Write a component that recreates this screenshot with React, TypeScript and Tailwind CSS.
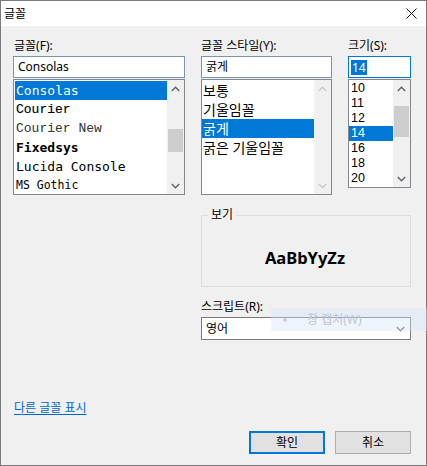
import React from "react";

const UI = "font-['Noto_Sans','Noto_Sans_CJK_KR',sans-serif]";

function Chevron({ dir, color }: { dir: "up" | "down"; color: string }) {
  return (
    <svg width="9" height="6" viewBox="0 0 9 6">
      <polyline
        points={dir === "up" ? "0.8,5 4.5,1.2 8.2,5" : "0.8,1 4.5,4.8 8.2,1"}
        fill="none"
        stroke={color}
        strokeWidth="1.3"
      />
    </svg>
  );
}

function Scrollbar({
  enabled,
  thumbTop,
  thumbH,
}: {
  enabled: boolean;
  thumbTop?: number;
  thumbH?: number;
}) {
  const c = enabled ? "#606060" : "#c8c8c8";
  return (
    <div className="w-[17px] h-full bg-[#f0f0f0] flex flex-col">
      <div className="h-[17px] flex items-center justify-center">
        <Chevron dir="up" color={c} />
      </div>
      <div className="flex-1 relative">
        {enabled && thumbTop !== undefined && (
          <div
            className="absolute left-px right-px bg-[#cdcdcd]"
            style={{ top: thumbTop, height: thumbH }}
          />
        )}
      </div>
      <div className="h-[17px] flex items-center justify-center">
        <Chevron dir="down" color={c} />
      </div>
    </div>
  );
}

export default function App() {
  const fonts: { name: string; cls: string }[] = [
    { name: "Consolas", cls: "font-['DejaVu_Sans_Mono',monospace] text-[13px]" },
    { name: "Courier", cls: "font-['Liberation_Mono',monospace] text-[13px] [-webkit-text-stroke:0.15px_black]" },
    { name: "Courier New", cls: "font-['Liberation_Mono',monospace] text-[13px] text-[#333]" },
    { name: "Fixedsys", cls: "font-['DejaVu_Sans_Mono',monospace] text-[13px] font-bold" },
    { name: "Lucida Console", cls: "font-['DejaVu_Sans_Mono',monospace] text-[13px]" },
    { name: "MS Gothic", cls: "font-['DejaVu_Sans_Mono',monospace] text-[11.5px]" },
  ];
  const styles = ["보통", "기울임꼴", "굵게", "굵은 기울임꼴"];
  const sizes = ["10", "11", "12", "14", "16", "18", "20"];

  return (
    <div
      className={`w-[427px] h-[466px] border border-[#7a7a7a] flex flex-col bg-[#f0f0f0] text-black ${UI}`}
    >
      {/* title bar */}
      <div className="h-[25px] bg-white flex items-center justify-between pl-[3px] pr-[9px]">
        <span className="text-[12px] leading-[14px]">글꼴</span>
        <svg width="11" height="11" viewBox="0 0 11 11">
          <line x1="0.5" y1="0.5" x2="10.5" y2="10.5" stroke="#111" strokeWidth="1" />
          <line x1="10.5" y1="0.5" x2="0.5" y2="10.5" stroke="#111" strokeWidth="1" />
        </svg>
      </div>

      {/* body */}
      <div className="flex-1 relative pl-[12px] pr-[15px] pt-[13px] flex flex-col">
        <div className="flex">
          {/* font column */}
          <div className="w-[172px] flex flex-col">
            <div className="text-[12px] leading-[14px] h-[14px] pl-px">글꼴(F):</div>
            <div className="mt-[3px] h-[22px] border border-[#7d93b2] bg-white flex items-center pl-[4px] text-[12px] leading-[16px]">
              Consolas
            </div>
            <div className="mt-px h-[116px] border border-[#828790] bg-white flex">
              <div className="flex-1 pt-px pl-px">
                {fonts.map((f, i) => (
                  <div
                    key={f.name}
                    className={`h-[19px] leading-[19px] flex items-center pl-[1px] whitespace-nowrap ${f.cls} ${
                      i === 0 ? "bg-[#0078d7] text-white" : ""
                    }`}
                  >
                    {f.name}
                  </div>
                ))}
              </div>
              <Scrollbar enabled thumbTop={32} thumbH={23} />
            </div>
          </div>

          {/* right area */}
          <div className="ml-[16px] w-[210px] flex flex-col">
            <div className="flex">
              {/* style column */}
              <div className="w-[131px] flex flex-col">
                <div className="text-[12px] leading-[14px] h-[14px]">글꼴 스타일(Y):</div>
                <div className="mt-[3px] h-[22px] border border-[#7d93b2] bg-white flex items-center pl-[4px] text-[12px] leading-[16px]">
                  굵게
                </div>
                <div className="mt-px h-[116px] border border-[#828790] bg-white flex">
                  <div className="flex-1 pt-px">
                    {styles.map((s, i) => (
                      <div
                        key={s}
                        className={`h-[19px] leading-[19px] flex items-center pl-[1px] text-[14px] whitespace-nowrap ${
                          i === 2 ? "bg-[#0078d7] text-white" : ""
                        }`}
                      >
                        {s}
                      </div>
                    ))}
                  </div>
                  <Scrollbar enabled={false} />
                </div>
              </div>

              {/* size column */}
              <div className="ml-[16px] w-[63px] flex flex-col">
                <div className="text-[12px] leading-[14px] h-[14px]">크기(S):</div>
                <div className="mt-[3px] h-[22px] border border-[#0078d7] bg-white flex items-center pl-[2px] text-[12px]">
                  <span className="bg-[#0078d7] text-white leading-[15px] px-px">14</span>
                </div>
                <div className="mt-px h-[109px] border border-[#828790] bg-white flex">
                  <div className="flex-1 pt-px">
                    {sizes.map((s) => (
                      <div
                        key={s}
                        className={`h-[15px] leading-[15px] flex items-center pl-[2px] text-[12.5px] font-['Liberation_Sans',sans-serif] ${
                          s === "14" ? "bg-[#0078d7] text-white" : ""
                        }`}
                      >
                        {s}
                      </div>
                    ))}
                  </div>
                  <Scrollbar enabled thumbTop={9} thumbH={31} />
                </div>
              </div>
            </div>

            {/* preview group */}
            <div className="mt-[20px] h-[72px] border border-[#dcdcdc] relative flex items-center justify-center">
              <span className="absolute left-[6px] top-[-8px] bg-[#f0f0f0] px-[3px] text-[12px] leading-[14px]">
                보기
              </span>
              <span className="font-bold text-[16.5px] leading-[20px] mt-[13px] pr-[2px]">AaBbYyZz</span>
            </div>

            {/* script */}
            <div className="mt-[13px] text-[12px] leading-[14px] h-[14px]">스크립트(R):</div>
            <div className="mt-[3px] h-[23px] border border-[#7a7a7a] bg-white flex items-center justify-between pl-[4px] pr-[5px] text-[12px] leading-[16px]">
              <span>영어</span>
              <svg width="9" height="6" viewBox="0 0 9 6">
                <polyline points="0.8,1 4.5,4.8 8.2,1" fill="none" stroke="#505050" strokeWidth="1.1" />
              </svg>
            </div>
          </div>
        </div>

        {/* link */}
        <div className="mt-[54px] h-[14px] pl-px">
          <span className="text-[12px] leading-[14px] text-[#0066cc] underline underline-offset-2">
            다른 글꼴 표시
          </span>
        </div>

        {/* buttons */}
        <div className="mt-[23px] flex justify-end gap-[10px]">
          <button className="w-[76px] h-[23px] border-2 border-[#0078d7] bg-[#e1e1e1] text-[12px] leading-[16px] flex items-center justify-center">
            확인
          </button>
          <button className="w-[76px] h-[23px] border border-[#adadad] bg-[#e1e1e1] text-[12px] leading-[16px] flex items-center justify-center">
            취소
          </button>
        </div>

        {/* ghost overlay */}
        <div className="absolute left-[270px] right-[-1px] top-[282px] h-[23px] bg-[#d4e6f7]/40 flex items-center pl-[12px] gap-[20px] pointer-events-none">
          <span className="w-[4px] h-[4px] rounded-full bg-[#c2d0e0]" />
          <span className="text-[12px] leading-[14px] text-[#b8c6d8]">창 캡처(W)</span>
        </div>
      </div>
    </div>
  );
}
